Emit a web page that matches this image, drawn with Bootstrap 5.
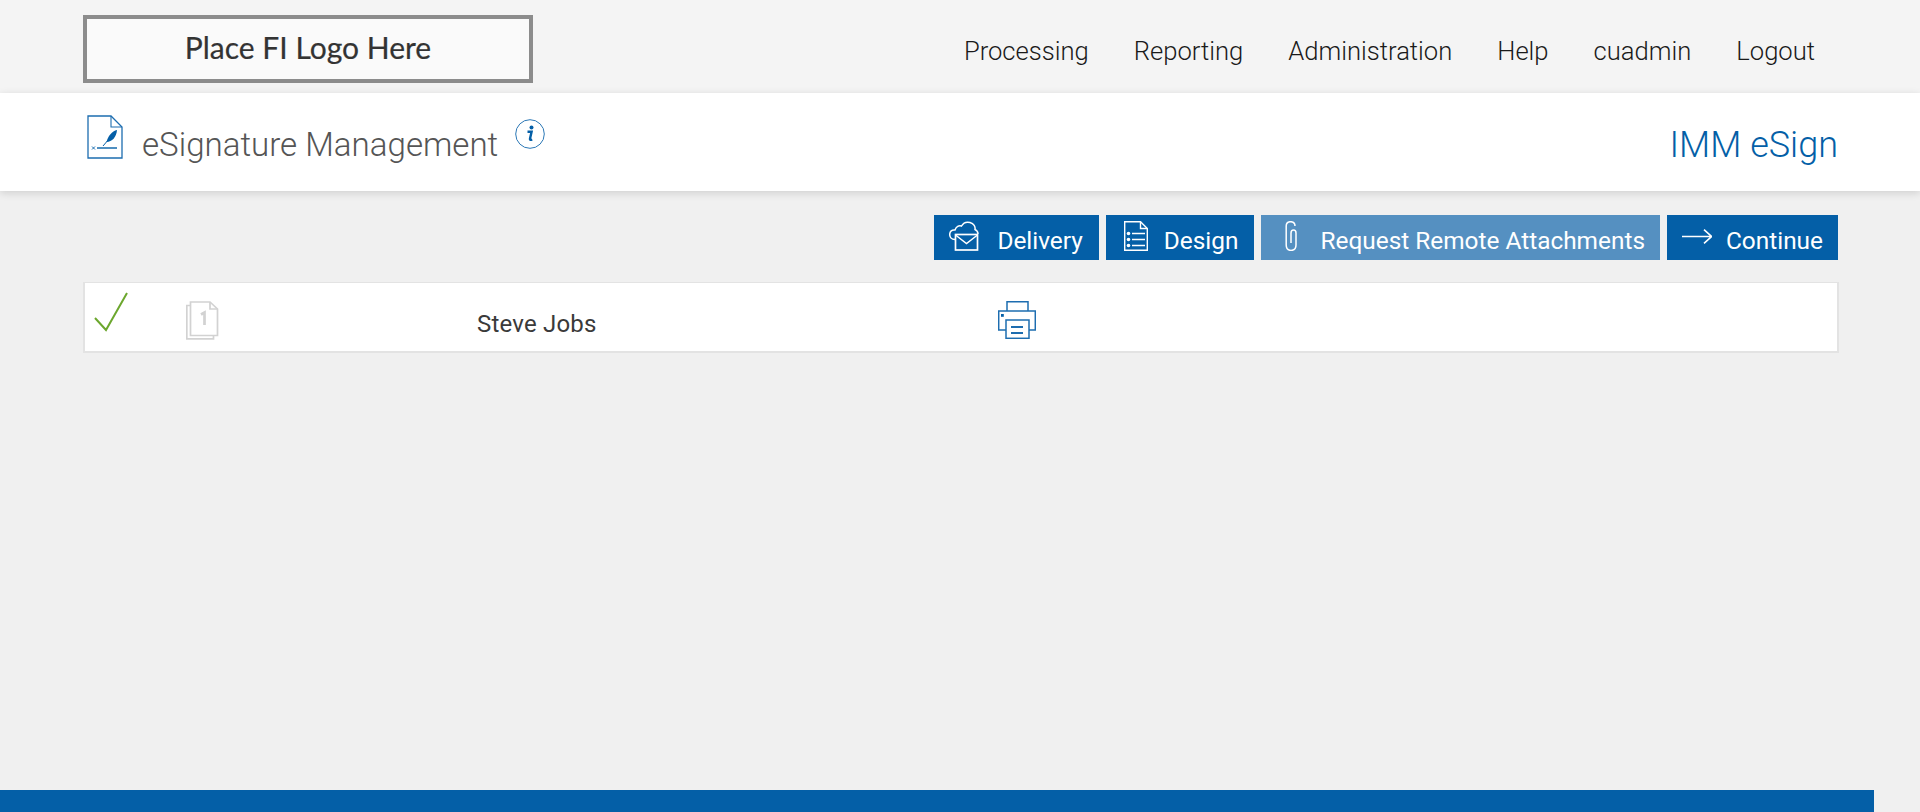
<!DOCTYPE html>
<html lang="en">
<head>
<meta charset="utf-8">
<title>eSignature Management</title>
<link rel="stylesheet" href="https://cdn.jsdelivr.net/npm/bootstrap@5.3.0/dist/css/bootstrap.min.css">
<style>
html,body{height:100%;overflow:hidden}
body{background:#f0f0f0;font-family:Roboto,"Liberation Sans",sans-serif;color:#333}
.page-wrap{height:812px}
.top-bar{background:#f4f4f4;height:93px;padding:15px 105px 0 83px}
.logo-box{width:450px;height:68px;border:4px solid #8c8c8c;background:#fafafa;font-family:Lato,"Noto Sans",sans-serif;font-size:30px;color:#333;line-height:1;padding-bottom:4px}
.logo-box span{-webkit-text-stroke:.2px #333}
.top-link{font-weight:300;font-size:25.6px;line-height:30px;color:#1a1a1a;text-decoration:none;margin-left:45px}
.top-nav{padding-top:21px}
.title-bar{background:#fff;height:98px;padding:0 82px 0 87px;box-shadow:0 2px 8px rgba(0,0,0,.14);position:relative}
.page-title{font-weight:300;font-size:33.100px;line-height:38px;color:#555;margin:0 0 0 19px;padding-top:33px}
.product-name{font-weight:300;font-size:36px;line-height:42px;color:#045fa7;padding-top:31px}
.doc-ico{margin-top:22px;width:36px;height:44px}
.info-ico{margin:26px 0 0 17px;width:30px;height:30px}
.tool-row{padding:24px 82px 0 83px;gap:7px}
.act-btn{background:#045fa7;color:#fff;border:0;border-radius:0;height:45px;font-size:24.4px;line-height:30px;padding:0 15px;display:flex;align-items:center}
.act-btn:hover,.act-btn:disabled{background:#045fa7;color:#fff}
.act-btn:disabled{opacity:1;background:#5590c1}
.act-btn svg{display:block;flex:none;margin-bottom:3px}
.btn-label{padding-top:6px}
.pad-wide{padding-left:18px;padding-right:16px}
.pad-clip{padding-left:24px}
.pad-tail{padding-right:16px}
.gap-ico-a{margin-right:17px}
.gap-ico-b{margin-right:16px}
.gap-ico-c{margin-right:22px}
.gap-ico-d{margin-right:14px}
.sign-row{margin:22px 81px 0 83px;height:71px;background:#fff;border:2px solid #e3e3e3;border-top-width:1px;position:relative}
.sign-name{position:absolute;left:392px;top:27px;font-size:24px;line-height:28px;color:#3a3a3a;letter-spacing:.2px}
.chk-ico{position:absolute;left:9px;top:9px}
.stack-ico{position:absolute;left:101px;top:18px}
.print-ico{position:absolute;left:913px;top:18px}
.footer-bar{position:fixed;left:0;bottom:0;width:1874px;height:22px;background:#045fa7}
</style>
</head>
<body>
<div class="page-wrap">
  <div class="top-bar d-flex justify-content-between">
    <div class="logo-box d-flex align-items-center justify-content-center"><span>Place FI Logo Here</span></div>
    <nav class="top-nav d-flex">
      <a class="top-link" href="#">Processing</a>
      <a class="top-link" href="#">Reporting</a>
      <a class="top-link" href="#">Administration</a>
      <a class="top-link" href="#">Help</a>
      <a class="top-link" href="#">cuadmin</a>
      <a class="top-link" href="#">Logout</a>
    </nav>
  </div>
  <div class="title-bar d-flex justify-content-between">
    <div class="d-flex align-items-start">
      <svg class="doc-ico" viewBox="0 0 36 44" fill="none">
        <path d="M1 1H24L35 12V43H1Z" fill="#fff" stroke="#1d6db0" stroke-width="1.300"/>
        <path d="M24 1V12H35" stroke="#1d6db0" stroke-width="1.100"/>
        <path d="M30 15C25 16 21 21 19.500 27C25 27 29.500 22 30 15Z" fill="#045fa7"/>
        <path d="M16 31 22 24" stroke="#045fa7" stroke-width="1"/>
        <path d="M10 33H30" stroke="#045fa7" stroke-width="1.400"/>
        <path d="M5 31.500 8 34.500M8 31.500 5 34.500" stroke="#045fa7" stroke-width=".9"/>
      </svg>
      <h1 class="page-title">eSignature Management</h1>
      <svg class="info-ico" viewBox="0 0 30 30" fill="none">
        <circle cx="15" cy="15" r="14.300" stroke="#2c78b6" stroke-width="1"/>
        <circle cx="16.500" cy="8.500" r="2" fill="#045fa7"/>
        <path d="M12.500 12.800H16.600L15 19.800C14.800 20.900 15.400 21.300 17.200 20.500" stroke="#045fa7" stroke-width="2.400" fill="none"/>
      </svg>
    </div>
    <div class="product-name">IMM eSign</div>
  </div>
  <div class="tool-row d-flex justify-content-end">
    <button class="act-btn btn pad-tail" type="button">
      <svg class="gap-ico-a" width="31" height="30" viewBox="0 0 31 30" fill="none" stroke="#fff" stroke-width="1.500">
        <path d="M6 18.500C2.500 18.500 .7 16 .7 13.500C.7 10.500 3 8.500 6 9C7 5.500 10 4 12.500 5C14.500 1.500 18 .7 21 1.500C25 2.500 26.500 6 26 8.500C28 9.500 29 11 29 13"/>
        <rect x="6.500" y="13.500" width="22" height="15.500" fill="#045fa7" stroke-width="1.700"/>
        <path d="M6.500 14 17.500 22.500 28.500 14" stroke-width="1.500"/>
      </svg><span class="btn-label">Delivery</span></button>
    <button class="act-btn btn pad-wide" type="button">
      <svg class="gap-ico-b" width="24" height="30" viewBox="0 0 24 30" fill="none" stroke="#fff" stroke-width="1.400">
        <path d="M.7.700H16.500L23.300 7.500V29.300H.7Z"/>
        <path d="M16.500.700V7.500H23.300"/>
        <path d="M8 12.500H21M8 18.500H21M8 24.500H21"/>
        <circle cx="4.500" cy="12.500" r="1.800" fill="#fff" stroke="none"/>
        <circle cx="4.500" cy="18.500" r="1.800" fill="#fff" stroke="none"/>
        <circle cx="4.500" cy="24.500" r="1.800" fill="#fff" stroke="none"/>
      </svg><span class="btn-label">Design</span></button>
    <button class="act-btn btn pad-clip" type="button" disabled>
      <svg class="gap-ico-c" width="13" height="30" viewBox="0 0 13 30" fill="none" stroke="#fff" stroke-width="1.500">
        <path d="M10 5C10 2 8 .7 5.500 .7C3 .7 1.200 2.500 1.200 5V24C1.200 27.500 3 29.400 6 29.400C9 29.400 11 27.500 11 24V12C11 10 10 9 8.500 9C7 9 6 10 6 12V22"/>
      </svg><span class="btn-label">Request Remote Attachments</span></button>
    <button class="act-btn btn" type="button">
      <svg class="gap-ico-d" width="30" height="15" viewBox="0 0 30 15" fill="none" stroke="#fff" stroke-width="1.600">
        <path d="M0 7.500H29.500M22 .7 29.500 7.500 22 14.300"/>
      </svg><span class="btn-label">Continue</span></button>
  </div>
  <div class="sign-row">
    <svg class="chk-ico" width="34" height="41" viewBox="0 0 34 41" fill="none">
      <path d="M1 26 12 38 33 1" stroke="#6ca72e" stroke-width="2"/>
    </svg>
    <svg class="stack-ico" width="33" height="39" viewBox="0 0 33 39" fill="none" stroke="#d2d2d2" stroke-width="1.700">
      <path d="M4 4.500H.8V37.800H27.500V34.500"/>
      <path d="M4.500 1H24L31.500 8V34.500H4.500Z" fill="#fff"/>
      <path d="M24 1V8H31.500"/>
      <path d="M15 13.500 18.500 11.500V24" stroke-width="2.700"/>
    </svg>
    <span class="sign-name">Steve Jobs</span>
    <svg class="print-ico" width="38" height="38" viewBox="0 0 38 38" fill="none" stroke="#1d6db0" stroke-width="1.500">
      <path d="M9 10V.7H30V10"/>
      <path d="M8 29H.7V10H37.300V29H31"/>
      <rect x="8" y="19" width="23" height="18.300" fill="#fff"/>
      <path d="M13 26H25M13 32H25" stroke-width="2"/>
      <rect x="3" y="13" width="2.800" height="2.800" fill="#045fa7" stroke="none"/>
    </svg>
  </div>
</div>
<div class="footer-bar"></div>
<script src="https://cdn.jsdelivr.net/npm/bootstrap@5.3.0/dist/js/bootstrap.bundle.min.js"></script>
</body>
</html>
